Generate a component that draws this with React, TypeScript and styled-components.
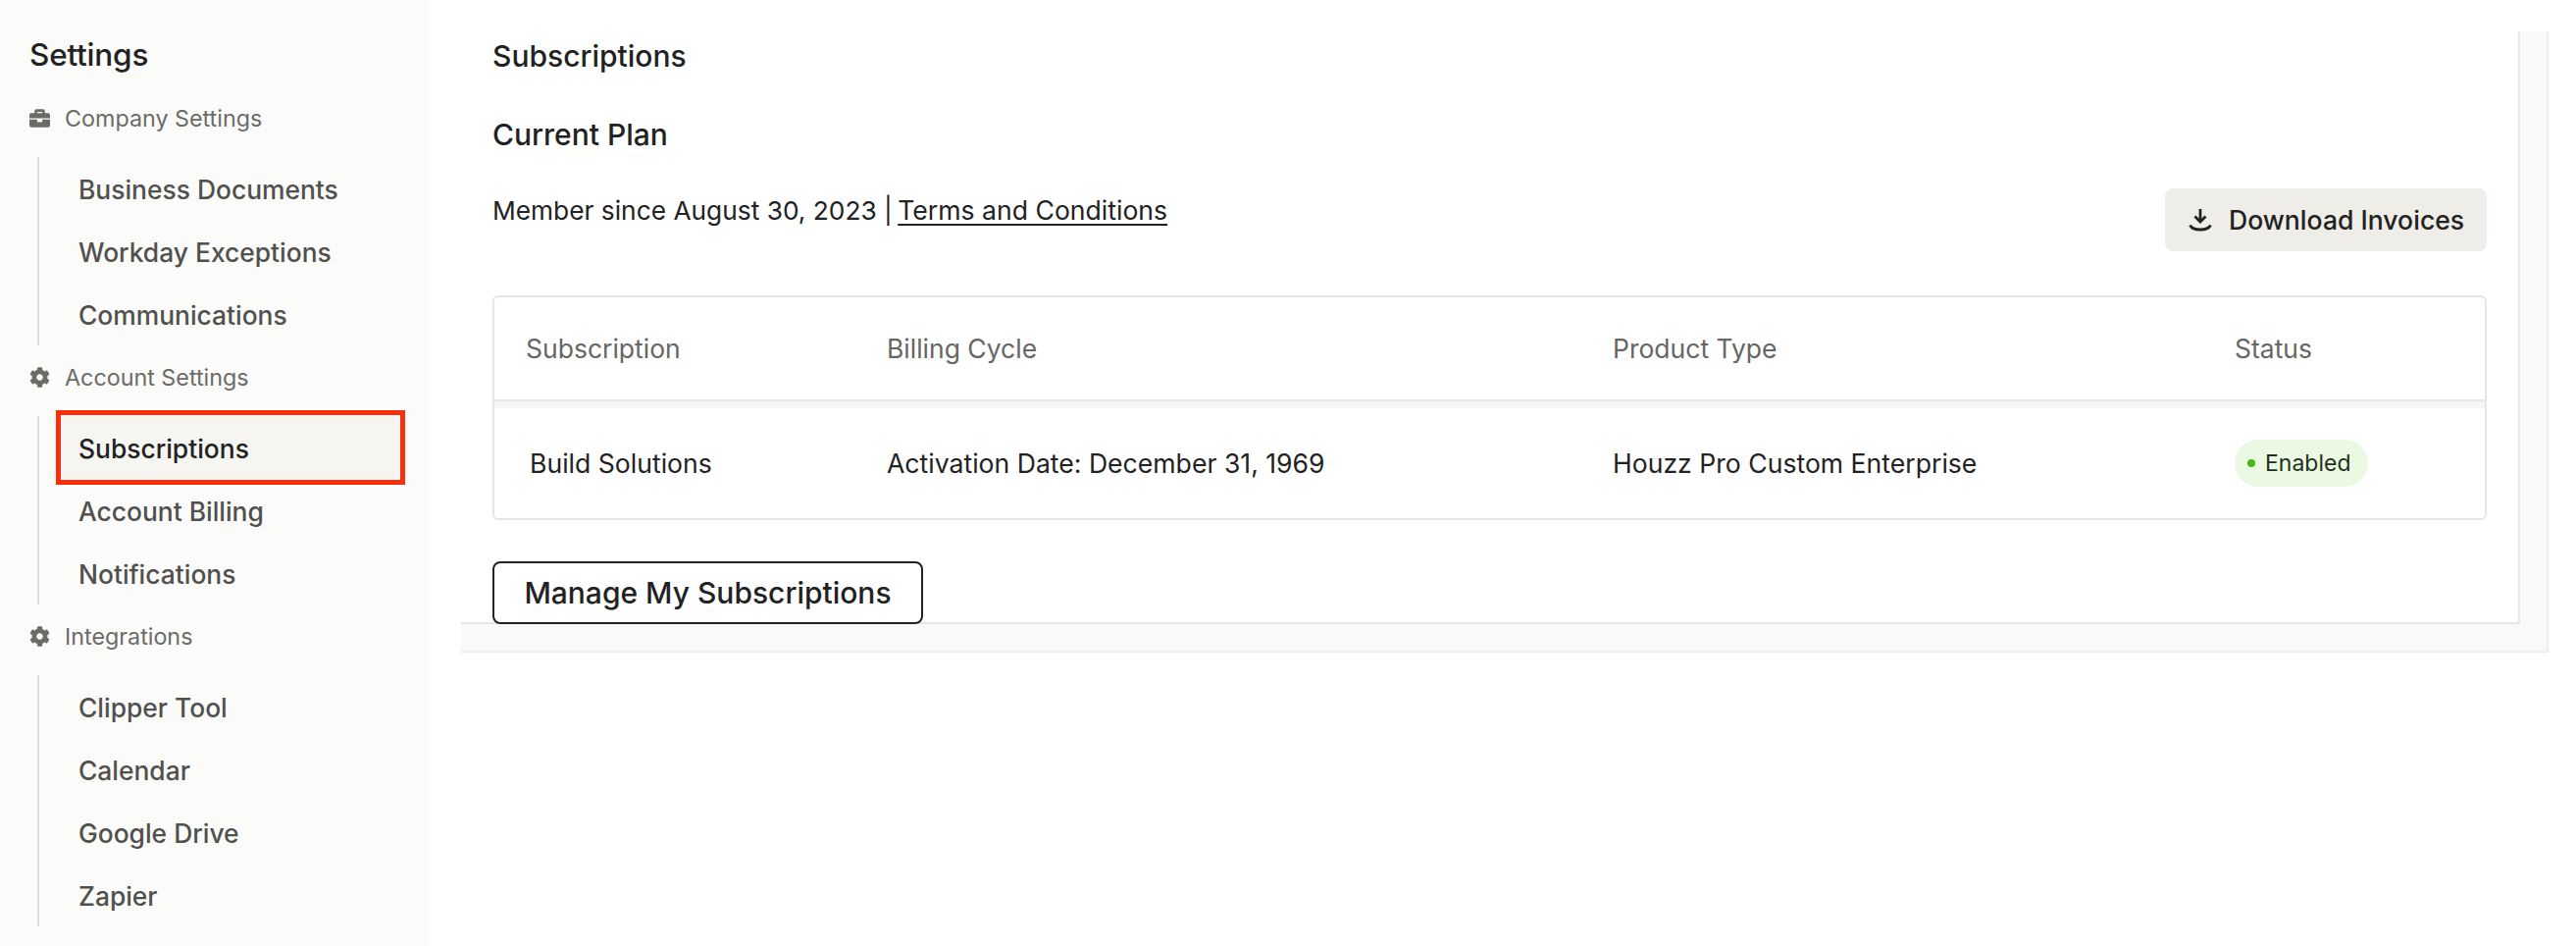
import styled, { createGlobalStyle } from 'styled-components'
import { FaBriefcase, FaCog } from 'react-icons/fa'

const GlobalStyle = createGlobalStyle`
  html, body {
    margin: 0;
    padding: 0;
    background: #fff;
    font-family: Inter, 'Liberation Sans', sans-serif;
    color: #222;
  }
`

const Page = styled.div`
  display: flex;
  width: 2626px;
  height: 964px;
  overflow: hidden;
`

const Sidebar = styled.aside`
  flex: 0 0 437px;
  height: 964px;
  background: #fbfbf9;
  box-sizing: border-box;
`

const SidebarTitle = styled.h2`
  margin: 0;
  height: 88px;
  padding: 32px 0 0 30px;
  box-sizing: border-box;
  font-size: 31.500px;
  line-height: 48px;
  font-weight: 500;
  letter-spacing: -0.2px;
  color: #222;
`

const SectionLabel = styled.div`
  display: flex;
  align-items: center;
  gap: 15px;
  height: 72px;
  padding: 0 0 8px 30px;
  box-sizing: border-box;
  font-size: 23.300px;
  color: #6b6b68;
  svg {
    width: 21px;
    height: 21px;
    color: #6b6b68;
  }
`

const NavList = styled.ul`
  list-style: none;
  margin: 0 0 0 38px;
  padding: 0;
  border-left: 2px solid #dfdbd7;
`

const NavItem = styled.li<{ $active?: boolean }>`
  margin-left: 23px;
  width: 344px;
  height: 64px;
  padding: 2px 0 0 17px;
  box-sizing: border-box;
  display: flex;
  align-items: center;
  font-size: 26.400px;
  font-weight: 500;
  color: ${(p) => (p.$active ? '#222' : '#50504d')};
  background: ${(p) => (p.$active ? '#f6f5f2' : 'transparent')};
  outline: ${(p) => (p.$active ? '5px solid #f92f0c' : 'none')};
  outline-offset: 1px;
`

const Main = styled.main`
  flex: 1;
  padding: 32px 28px 0 33px;
  min-width: 0;
`

const Band = styled.div`
  background: #f9f9f9;
  border-bottom: 2px solid #eeeeee;
  border-right: 2px solid #eeeeee;
  padding: 0 27px 27px 0;
`

const Panel = styled.section`
  background: #fff;
  border-right: 2px solid #e6e6e6;
  border-bottom: 2px solid #e6e6e6;
  height: 604px;
  padding: 10px 32px 0 32px;
  box-sizing: border-box;
`

const PageTitle = styled.h1`
  margin: 0;
  font-size: 30px;
  line-height: 30px;
  font-weight: 500;
  color: #222;
`

const PlanTitle = styled.h2`
  margin: 50px 0 0;
  font-size: 30px;
  line-height: 30px;
  font-weight: 500;
  color: #222;
`

const PlanRow = styled.div`
  display: flex;
  justify-content: space-between;
  align-items: flex-start;
  margin-top: 32px;
  height: 117px;
`

const MemberText = styled.p`
  margin: 6px 0 0;
  font-size: 26.300px;
  line-height: 48px;
  color: #222;
`

const TermsLink = styled.a`
  margin-left: -2px;
  font-size: 26.600px;
  color: inherit;
  text-decoration: underline;
  text-underline-offset: 4px;
  text-decoration-thickness: 2px;
`

const DownloadButton = styled.button`
  display: flex;
  align-items: center;
  gap: 17px;
  margin-top: 8px;
  width: 328px;
  height: 64px;
  padding: 0 0 0 24px;
  box-sizing: border-box;
  border: 0;
  border-radius: 8px;
  background: #eeede8;
  font: 500 26.600px Inter, 'Liberation Sans', sans-serif;
  color: #222;
  svg {
    width: 24px;
    height: 24px;
  }
`

const Table = styled.div`
  border: 2px solid #e6e6e6;
  border-radius: 6px;
  height: 229px;
  box-sizing: border-box;
`

const Row = styled.div<{ $head?: boolean }>`
  display: grid;
  grid-template-columns: 400px 740px 634px 1fr;
  align-items: center;
  box-sizing: border-box;
  height: ${(p) => (p.$head ? '106px' : '112px')};
  border-bottom: ${(p) => (p.$head ? '2px solid #e8e8e8' : '0')};
  font-size: ${(p) => (p.$head ? '26.500px' : '26.600px')};
  color: ${(p) => (p.$head ? '#666664' : '#222')};
`

const Cell = styled.div<{ $inset?: number }>`
  padding-left: ${(p) => p.$inset ?? 0}px;
`

const Spacer = styled.div`
  height: 7px;
  background: #f6f6f6;
`

const StatusPill = styled.span`
  display: inline-flex;
  align-items: center;
  gap: 10px;
  height: 48px;
  padding: 0 18px 0 13px;
  border-radius: 24px;
  background: #ebf9e3;
  font-size: 23px;
  color: #22301d;
`

const StatusDot = styled.i`
  width: 8px;
  height: 8px;
  border-radius: 50%;
  background: #46b814;
`

const ManageButton = styled.button`
  display: block;
  margin-top: 42px;
  width: 439px;
  height: 64px;
  padding: 0;
  border: 2px solid #222;
  border-radius: 8px;
  background: #fff;
  font: 500 30px Inter, 'Liberation Sans', sans-serif;
  color: #222;
`

const nav = [
  { label: 'Company Settings', icon: <FaBriefcase />, items: ['Business Documents', 'Workday Exceptions', 'Communications'] },
  { label: 'Account Settings', icon: <FaCog />, items: ['Subscriptions', 'Account Billing', 'Notifications'] },
  { label: 'Integrations', icon: <FaCog />, items: ['Clipper Tool', 'Calendar', 'Google Drive', 'Zapier'] },
]

const DownloadIcon = () => (
  <svg viewBox="0 0 24 24" fill="none" stroke="#222" strokeWidth="2.8">
    <path d="M12 1V13" />
    <path d="M6.500 8.500 12 14l5.500-5.500" />
    <path d="M1.500 17.500c1.600 3 4.400 4.500 10.500 4.500s8.900-1.500 10.500-4.500" />
  </svg>
)

export default function App() {
  return (
    <>
      <GlobalStyle />
      <Page>
        <Sidebar>
          <SidebarTitle>Settings</SidebarTitle>
          {nav.map((section) => (
            <div key={section.label}>
              <SectionLabel>
                {section.icon}
                {section.label}
              </SectionLabel>
              <NavList>
                {section.items.map((item) => (
                  <NavItem key={item} $active={item === 'Subscriptions'}>
                    {item}
                  </NavItem>
                ))}
              </NavList>
            </div>
          ))}
        </Sidebar>
        <Main>
          <Band>
            <Panel>
              <PageTitle>Subscriptions</PageTitle>
              <PlanTitle>Current Plan</PlanTitle>
              <PlanRow>
                <MemberText>
                  Member since August 30, 2023 | <TermsLink href="#terms">Terms and Conditions</TermsLink>
                </MemberText>
                <DownloadButton>
                  <DownloadIcon />
                  Download Invoices
                </DownloadButton>
              </PlanRow>
              <Table>
                <Row $head>
                  <Cell $inset={32}>Subscription</Cell>
                  <Cell>Billing Cycle</Cell>
                  <Cell>Product Type</Cell>
                  <Cell>Status</Cell>
                </Row>
                <Spacer />
                <Row>
                  <Cell $inset={36}>Build Solutions</Cell>
                  <Cell>Activation Date: December 31, 1969</Cell>
                  <Cell>Houzz Pro Custom Enterprise</Cell>
                  <Cell>
                    <StatusPill>
                      <StatusDot />
                      Enabled
                    </StatusPill>
                  </Cell>
                </Row>
              </Table>
              <ManageButton>Manage My Subscriptions</ManageButton>
            </Panel>
          </Band>
        </Main>
      </Page>
    </>
  )
}
